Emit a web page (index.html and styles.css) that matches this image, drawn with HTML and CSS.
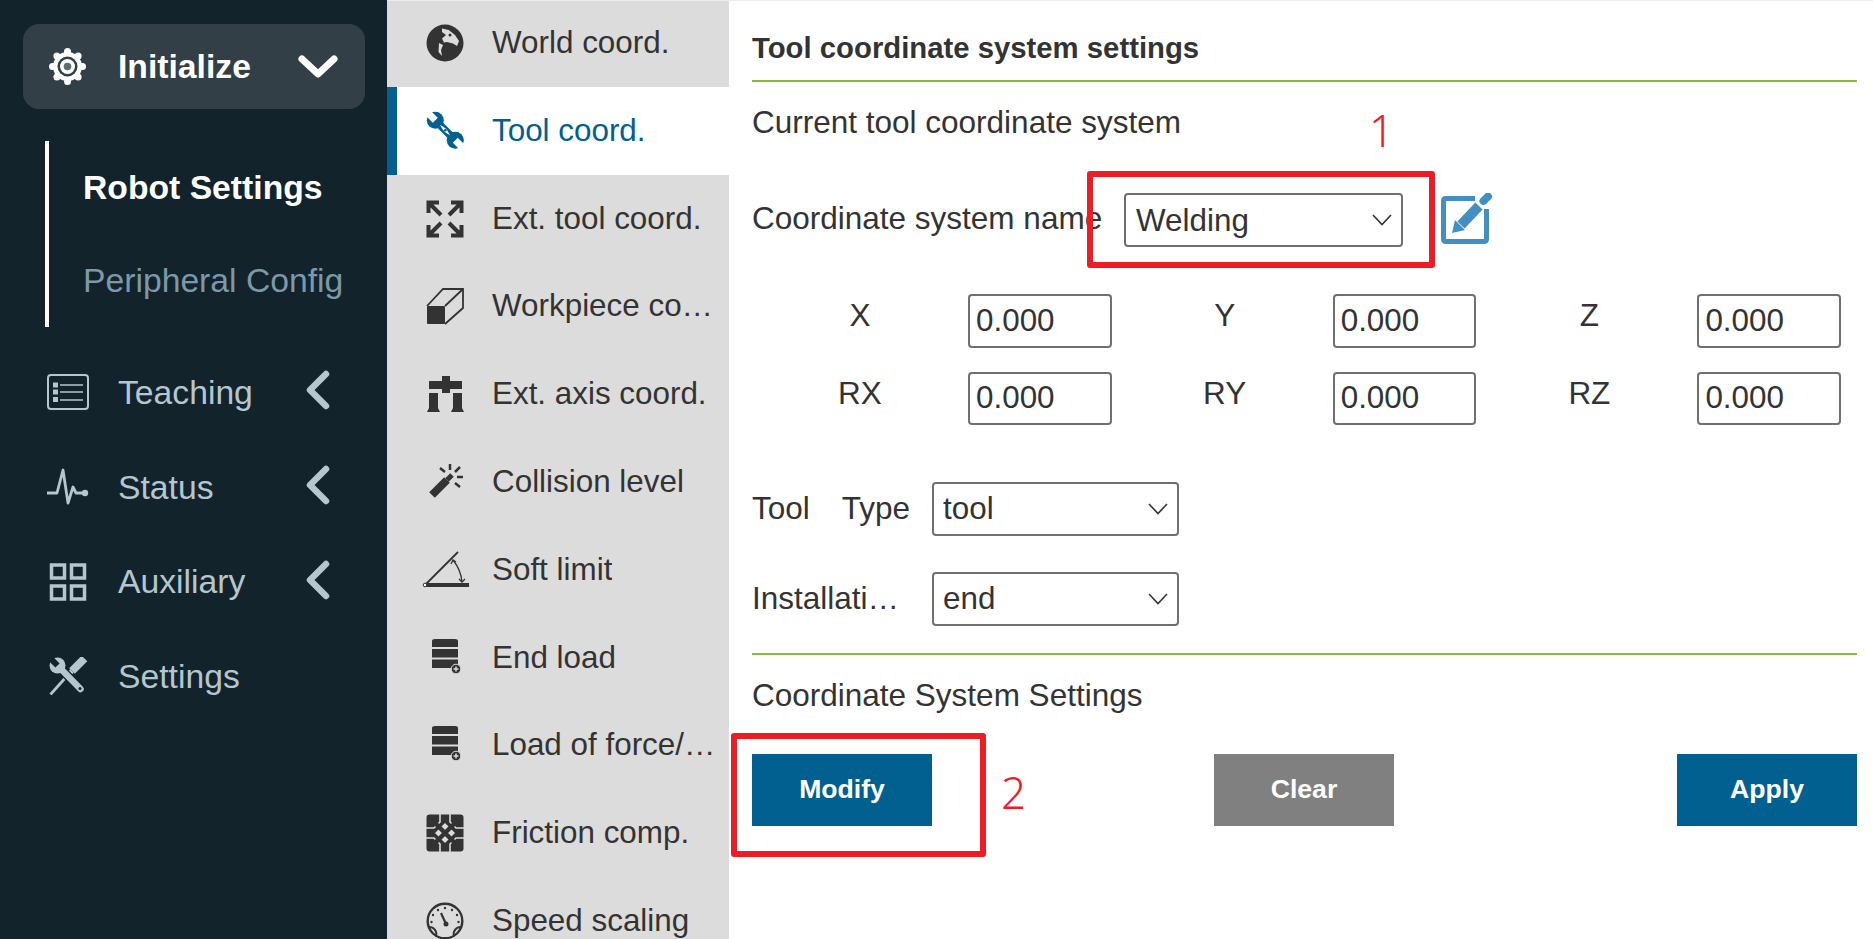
FILE: index.html
```html
<!DOCTYPE html>
<html lang="en">
<head>
    <meta charset="UTF-8">
    <meta name="viewport" content="width=device-width, initial-scale=1.0">
    <title>Tool coordinate system settings</title>
    <link rel="stylesheet" href="styles.css">
</head>
<body>

    <aside class="sidebar">
        <div class="nav-open">
            <svg class="nav-icon-open" viewBox="0 0 37 37">
                <g fill="#fff">
                    <circle cx="18.5" cy="3.5" r="3.5"/><circle cx="18.5" cy="33.5" r="3.5"/>
                    <circle cx="3.5" cy="18.5" r="3.5"/><circle cx="33.5" cy="18.5" r="3.5"/>
                    <circle cx="7.9" cy="7.9" r="3.5"/><circle cx="29.1" cy="7.9" r="3.5"/>
                    <circle cx="7.9" cy="29.1" r="3.5"/><circle cx="29.1" cy="29.1" r="3.5"/>
                    <circle cx="18.5" cy="18.5" r="14.5"/>
                </g>
                <circle cx="18.5" cy="18.5" r="10" fill="#323f46"/>
                <circle cx="18.5" cy="18.5" r="7.5" fill="#fff"/>
                <circle cx="18.5" cy="18.5" r="3.8" fill="#5d6a71"/>
            </svg>
            <span class="nav-open-text">Initialize</span>
            <svg class="nav-open-arrow" viewBox="0 0 40 24"><path d="M4 4 L20 19 L36 4" fill="none" stroke="#fff" stroke-width="7" stroke-linecap="round" stroke-linejoin="round"/></svg>
        </div>

        <div class="nav-sub">
            <div class="nav-sub-item active">Robot Settings</div>
            <div class="nav-sub-item">Peripheral Config</div>
        </div>

        <div class="nav-item">
            <svg class="nav-icon" viewBox="0 0 42 36" fill="none" stroke="#b5c6cf">
                <rect x="1" y="1" width="40" height="34" rx="3" stroke-width="2"/>
                <path d="M13 11 H36 M13 18 H36 M13 26 H36" stroke-width="1.6"/>
                <path d="M6 8.500 h5 v5 h-5 z M6 15.500 h5 v5 h-5 z M6 23 h5 v5 h-5 z" fill="#b5c6cf" stroke="none"/>
            </svg>
            <span>Teaching</span>
            <svg class="nav-arrow" viewBox="0 0 24 40"><path d="M20 4 L4 20 L20 36" fill="none" stroke="#b5c6cf" stroke-width="6.500" stroke-linecap="round" stroke-linejoin="round"/></svg>
        </div>
        <div class="nav-item">
            <svg class="nav-icon" viewBox="0 0 42 38" fill="none" stroke="#b5c6cf">
                <path d="M0 25 H10 L16 2 L21 35 L26 19 L29 25 H38" stroke-width="2.800" stroke-linejoin="round"/>
                <circle cx="38" cy="25" r="3.200" fill="#b5c6cf" stroke="none"/>
            </svg>
            <span>Status</span>
            <svg class="nav-arrow" viewBox="0 0 24 40"><path d="M20 4 L4 20 L20 36" fill="none" stroke="#b5c6cf" stroke-width="6.500" stroke-linecap="round" stroke-linejoin="round"/></svg>
        </div>
        <div class="nav-item">
            <svg class="nav-icon" viewBox="0 0 42 38" fill="none" stroke="#b5c6cf" stroke-width="3.500">
                <rect x="4.500" y="2" width="13" height="13"/><rect x="24.500" y="2" width="13" height="13"/>
                <rect x="4.500" y="23" width="13" height="13"/><rect x="24.500" y="23" width="13" height="13"/>
            </svg>
            <span>Auxiliary</span>
            <svg class="nav-arrow" viewBox="0 0 24 40"><path d="M20 4 L4 20 L20 36" fill="none" stroke="#b5c6cf" stroke-width="6.500" stroke-linecap="round" stroke-linejoin="round"/></svg>
        </div>
        <div class="nav-item">
            <svg class="nav-icon" viewBox="0 0 42 38" fill="none" stroke="#b5c6cf">
                <path d="M20 19 L3.500 37.500" stroke-width="2.800"/>
                <path d="M25 14 L20 19" stroke-width="5"/>
                <path d="M37.500 1.500 L25 14" stroke-width="8"/>
                <path d="M12 10 L33.500 32" stroke="#12232c" stroke-width="9"/>
                <path d="M12 10 L33.500 32" stroke-width="6.500" stroke-linecap="round"/>
                <circle cx="10.500" cy="8.500" r="8" fill="#b5c6cf" stroke="none"/>
                <rect x="-3" y="-12" width="6" height="12" fill="#12232c" stroke="none" transform="translate(10.500 8.500) rotate(-45)"/>
                <circle cx="33" cy="31.500" r="1.500" fill="#12232c" stroke="none"/>
            </svg>
            <span>Settings</span>
        </div>
    </aside>

    <nav class="submenu">
        <div class="menu-row">
            <svg class="menu-icon" viewBox="0 0 48 48">
                <circle cx="24" cy="24" r="18.500" fill="#333"/>
                <path d="M21 9.500 L27.700 11 L34 16 L38 22 L36 27 L32 24.500 L26 23 L23 23.500 L21 19.500 L25 16 L21 13 Z" fill="#dcdcdc"/>
                <path d="M18 24 L22 26 L20 31 L21 37 L17.500 33 Z" fill="#dcdcdc"/>
                <circle cx="29" cy="16" r="1.500" fill="#333"/>
            </svg>
            <span class="menu-text">World coord.</span>
        </div>
        <div class="menu-row active">
            <svg class="menu-icon" viewBox="0 0 48 48" fill="#01608f">
                <path d="M14 13 L34.500 33.500" stroke="#01608f" stroke-width="7.500"/>
                <circle cx="14.300" cy="13.300" r="8.500"/>
                <circle cx="34.300" cy="33.300" r="8.500"/>
                <rect x="-3.500" y="-13" width="7" height="13" fill="#fff" transform="translate(14.300 13.300) rotate(-45)"/>
                <rect x="-3.500" y="-13" width="7" height="13" fill="#fff" transform="translate(34.300 33.300) rotate(135)"/>
                <path d="M19 18 Q25 20 29 28 Q23 26 19 18 Z" fill="#fff"/>
                <circle cx="24.300" cy="23.300" r="1.300"/>
            </svg>
            <span class="menu-text">Tool coord.</span>
        </div>
        <div class="menu-row">
            <svg class="menu-icon" viewBox="0 0 48 48" fill="none" stroke="#333" stroke-width="4">
                <path d="M7.500 18 V7.500 H18 M8 8 L20 20 M40.500 18 V7.500 H30 M40 8 L28 20 M7.500 30 V40.500 H18 M8 40 L20 28 M40.500 30 V40.500 H30 M40 40 L28 28"/>
            </svg>
            <span class="menu-text">Ext. tool coord.</span>
        </div>
        <div class="menu-row">
            <svg class="menu-icon" viewBox="0 0 48 48">
                <rect x="6" y="24" width="18" height="18" rx="1" fill="#333"/>
                <path d="M6 24 L22 7 H42 V26 L24 42" fill="none" stroke="#333" stroke-width="1.800"/>
                <path d="M24 24 L42 7" stroke="#333" stroke-width="1.800"/>
            </svg>
            <span class="menu-text">Workpiece coord.</span>
        </div>
        <div class="menu-row">
            <svg class="menu-icon" viewBox="0 0 48 48" fill="#333">
                <rect x="8" y="11" width="33" height="8"/>
                <rect x="21" y="6" width="8" height="17"/>
                <path d="M8 23 H17 L17 38 L19 42 H6 L8 38 Z M32 23 H41 L41 38 L43 42 H30 L32 38 Z"/>
            </svg>
            <span class="menu-text">Ext. axis coord.</span>
        </div>
        <div class="menu-row">
            <svg class="menu-icon" viewBox="0 0 48 48" fill="none" stroke="#333">
                <path d="M11 37 L26 22" stroke-width="8"/>
                <path d="M26 22 L31 17" stroke-width="5"/>
                <path d="M29 6 V12 M36 19 H42 M34 14 L39 9 M34 25 L39 29 M19 10 L24 14" stroke-width="2.500"/>
            </svg>
            <span class="menu-text">Collision level</span>
        </div>
        <div class="menu-row">
            <svg class="menu-icon" viewBox="0 0 48 48" fill="none" stroke="#333">
                <path d="M4 39 L37 6" stroke-width="1.800"/>
                <path d="M5 39 H48" stroke-width="4"/>
                <path d="M32 14 Q40 24 41 36" stroke-width="1.300"/>
                <path d="M30 18 L32 14 L35 16 M38 33 L41 36 L44 33" stroke-width="1.300"/>
                <circle cx="4" cy="39" r="1.800" fill="#fff" stroke-width="1"/>
            </svg>
            <span class="menu-text">Soft limit</span>
        </div>
        <div class="menu-row">
            <svg class="menu-icon" viewBox="0 0 48 48" fill="#333">
                <path d="M11 13 V7 Q11 5 14 5 H34 Q37 5 37 7 V13 Z"/>
                <rect x="11" y="15" width="26" height="8.500"/>
                <rect x="11" y="25.500" width="26" height="8.500"/>
                <circle cx="35" cy="35" r="4.800" fill="#333" stroke="#dcdcdc" stroke-width="1"/>
                <path d="M32.500 35 H37.500 M35 32.500 V37.500" stroke="#dcdcdc" stroke-width="1.500"/>
            </svg>
            <span class="menu-text">End load</span>
        </div>
        <div class="menu-row">
            <svg class="menu-icon" viewBox="0 0 48 48" fill="#333">
                <path d="M11 13 V7 Q11 5 14 5 H34 Q37 5 37 7 V13 Z"/>
                <rect x="11" y="15" width="26" height="8.500"/>
                <rect x="11" y="25.500" width="26" height="8.500"/>
                <circle cx="35" cy="35" r="4.800" fill="#333" stroke="#dcdcdc" stroke-width="1"/>
                <path d="M32.500 35 H37.500 M35 32.500 V37.500" stroke="#dcdcdc" stroke-width="1.500"/>
            </svg>
            <span class="menu-text">Load of force/torque sensor</span>
        </div>
        <div class="menu-row">
            <svg class="menu-icon" viewBox="0 0 48 48">
                <rect x="5.500" y="5.500" width="37" height="37" rx="3" fill="#333"/>
                <path d="M19 5 V13 L13 19 H5 M29 5 V13 L35 19 H43 M19 43 V35 L13 29 H5 M29 43 V35 L35 29 H43" fill="none" stroke="#dcdcdc" stroke-width="1.600"/>
                <path d="M24 14 L34 24 L24 34 L14 24 Z" fill="#dcdcdc"/>
                <path d="M14 14 L34 34 M34 14 L14 34" stroke="#333" stroke-width="4.500"/>
            </svg>
            <span class="menu-text">Friction comp.</span>
        </div>
        <div class="menu-row">
            <svg class="menu-icon" viewBox="0 0 48 48" fill="none" stroke="#333">
                <circle cx="24" cy="24" r="17.300" stroke-width="2.400"/>
                <path d="M8 30 A7 7 0 0 1 15 39 M40 30 A7 7 0 0 0 33 39" stroke-width="2"/>
                <path d="M20 16 L25 27" stroke-width="2.200"/>
                <circle cx="25" cy="27" r="2.500" fill="#333" stroke="none"/>
                <g fill="#333" stroke="none">
                    <circle cx="24" cy="11" r="1.200"/><circle cx="17" cy="13" r="1.200"/><circle cx="31" cy="13" r="1.200"/>
                    <circle cx="12" cy="18" r="1.200"/><circle cx="36" cy="18" r="1.200"/><circle cx="10.500" cy="25" r="1.200"/><circle cx="37.500" cy="25" r="1.200"/>
                </g>
            </svg>
            <span class="menu-text">Speed scaling</span>
        </div>
    </nav>

    <main class="content">
        <h2 class="page-title">Tool coordinate system settings</h2>
        <p class="sub-title">Current tool coordinate system</p>

        <div class="name-row">
            <label class="name-label">Coordinate system name</label>
            <select class="field name-select"><option>Welding</option></select>
            <svg class="edit-icon" viewBox="0 0 52 52">
                <path d="M34 5.500 H5 Q2.500 5.500 2.500 8 V46 Q2.500 48.500 5 48.500 H43 Q45.500 48.500 45.500 46 V16" fill="none" stroke="#4290c2" stroke-width="5"/>
                <path d="M20 32 L38 13" stroke="#4290c2" stroke-width="10"/>
                <path d="M11 40 L14 27 L24 37 Z" fill="#4290c2"/>
                <path d="M42.500 8 L47 3.500" stroke="#4290c2" stroke-width="8" stroke-linecap="round"/>
            </svg>
        </div>

        <div class="coord-grid">
            <div class="coord-item"><span>X</span><input class="field coord-input" value="0.000"></div>
            <div class="coord-item"><span>Y</span><input class="field coord-input" value="0.000"></div>
            <div class="coord-item"><span>Z</span><input class="field coord-input" value="0.000"></div>
            <div class="coord-item"><span>RX</span><input class="field coord-input" value="0.000"></div>
            <div class="coord-item"><span>RY</span><input class="field coord-input" value="0.000"></div>
            <div class="coord-item"><span>RZ</span><input class="field coord-input" value="0.000"></div>
        </div>

        <div class="form-row tool-row">
            <label class="form-label"><span class="label-word">Tool</span>Type</label>
            <select class="field form-select"><option>tool</option></select>
        </div>
        <div class="form-row install-row">
            <label class="form-label">Installation site</label>
            <select class="field form-select"><option>end</option></select>
        </div>

        <hr class="divider">
        <p class="section-title">Coordinate System Settings</p>

        <div class="button-row">
            <button class="btn">Modify</button>
            <button class="btn btn-grey">Clear</button>
            <button class="btn">Apply</button>
        </div>

        <!-- annotations drawn over the screenshot -->
        <div class="mark mark-one"></div>
        <span class="mark-num num-one">1</span>
        <div class="mark mark-two"></div>
        <span class="mark-num num-two">2</span>
    </main>

</body>
</html>
```

FILE: styles.css
```css
* {
    box-sizing: border-box;
}
body {
    margin: 0;
    height: 939px;
    overflow: hidden;
    display: flex;
    font-family: "Liberation Sans", Arial, sans-serif;
    color: #333;
    background-color: #fff;
}

/* left dark menu */
.sidebar {
    width: 387px;
    flex: none;
    background-color: #12232c;
    color: #b5c6cf;
    font-size: 33.7px;
    padding-top: 24px;
}
.nav-open {
    display: flex;
    align-items: center;
    height: 85px;
    margin: 0 22px 0 23px;
    padding-left: 26px;
    background-color: #323f46;
    border-radius: 16px;
    color: #fff;
    font-weight: bold;
}
.nav-icon-open {
    width: 37px;
    height: 37px;
    margin-right: 32px;
}
.nav-open-arrow {
    width: 40px;
    height: 24px;
    margin-left: auto;
    margin-right: 27px;
}
.nav-sub {
    height: 186px;
    margin: 32px 0 18px 45px;
    padding-left: 34px;
    border-left: 4px solid #fff;
}
.nav-sub-item {
    height: 93px;
    line-height: 93px;
    color: #7b99a8;
    white-space: nowrap;
}
.nav-sub-item.active {
    color: #fff;
    font-weight: bold;
}
.nav-item {
    display: flex;
    align-items: center;
    height: 94.7px;
    padding-left: 47px;
}
.nav-icon {
    width: 42px;
    height: 38px;
    margin-right: 29px;
}
.nav-arrow {
    width: 24px;
    height: 40px;
    margin-left: auto;
    margin-right: 57px;
    margin-bottom: 4px;
}

/* second column */
.submenu {
    width: 342px;
    flex: none;
    background-color: #dcdcdc;
    border-top: 1px solid #ececec;
}
.menu-row {
    display: flex;
    align-items: center;
    height: 87.8px;
    padding: 0 11px 0 34px;
    font-size: 31.4px;
}
.menu-row:first-child {
    margin-top: -1.800px;
}
.menu-row.active {
    background-color: #fff;
    color: #01608f;
    box-shadow: inset 10px 0 0 #01608f;
}
.menu-icon {
    width: 48px;
    height: 48px;
    flex: none;
    margin-right: 23px;
    overflow: visible;
}
.menu-text {
    white-space: nowrap;
    overflow: hidden;
    text-overflow: ellipsis;
}

/* right form */
.content {
    position: relative;
    flex: 1;
    padding: 0 16px 0 23px;
    border-top: 1px solid #ececec;
    font-size: 31.5px;
}
.page-title {
    margin: 0;
    padding: 30px 0 15px;
    line-height: 34px;
    font-size: 29.3px;
    font-weight: bold;
    border-bottom: 2px solid #8bbb3a;
}
.sub-title {
    margin: 23px 0 0;
    line-height: 34px;
}
.name-row {
    display: flex;
    align-items: center;
    margin-top: 54px;
    height: 54px;
}
.name-label {
    width: 372px;
    flex: none;
    white-space: nowrap;
    padding-bottom: 3px;
}
.field {
    height: 54px;
    border: 2px solid #707070;
    border-radius: 4px;
    background-color: #fff;
    color: #333;
    font-family: inherit;
    font-size: 31.4px;
    outline: none;
}
select.field {
    appearance: none;
    padding: 0 0 0 9px;
    background-image: url("data:image/svg+xml,%3Csvg xmlns='http://www.w3.org/2000/svg' width='20' height='12'%3E%3Cpath d='M1 1 L10 10.500 L19 1' fill='none' stroke='%23333' stroke-width='1.600'/%3E%3C/svg%3E");
    background-repeat: no-repeat;
    background-position: right 9px center;
}
select.name-select {
    width: 279px;
    padding-left: 10px;
}
.edit-icon {
    width: 52px;
    height: 52px;
    margin: -2px 0 0 38px;
    flex: none;
}
.coord-grid {
    display: grid;
    grid-template-columns: repeat(3, 364.700px);
    row-gap: 24px;
    margin-top: 47px;
}
.coord-item {
    display: grid;
    grid-template-columns: 216px 143.5px;
    align-items: center;
    text-align: center;
}
.coord-item span {
    padding-bottom: 10px;
}
.coord-input {
    width: 143.5px;
    height: 53.5px;
    padding: 0 0 0 6px;
}
.form-row {
    display: flex;
    align-items: center;
}
.tool-row {
    margin-top: 56.5px;
}
.install-row {
    margin-top: 36px;
}
.form-label {
    width: 160px;
    margin-right: 20px;
    white-space: nowrap;
    overflow: hidden;
    text-overflow: ellipsis;
}
.label-word {
    margin-right: 32px;
}
.form-select {
    width: 247px;
}
.divider {
    height: 2px;
    margin: 27px 0 0;
    border: none;
    background-color: #8bbb3a;
}
.section-title {
    margin: 23px 0 0;
    line-height: 34px;
}
.button-row {
    display: flex;
    justify-content: space-between;
    margin-top: 42px;
}
.btn {
    width: 180px;
    height: 72px;
    border: none;
    background-color: #01608f;
    color: #fff;
    font-family: inherit;
    font-size: 26.6px;
    font-weight: bold;
    cursor: pointer;
}
.btn-grey {
    margin-right: 1px;
    background-color: #808080;
}

/* red marks */
.mark {
    position: absolute;
    border: 6px solid #ee1c25;
    border-radius: 3px;
}
.mark-one {
    left: 358px;
    top: 170px;
    width: 348px;
    height: 97px;
}
.mark-two {
    left: 2px;
    top: 732px;
    width: 255px;
    height: 124px;
}
.mark-num {
    position: absolute;
    font-family: "Noto Sans", sans-serif;
    font-weight: 350;
    font-size: 44px;
    line-height: 50px;
    color: #ee1c25;
}
.num-one {
    left: 640px;
    top: 104px;
}
.num-two {
    left: 272px;
    top: 766px;
}
```
